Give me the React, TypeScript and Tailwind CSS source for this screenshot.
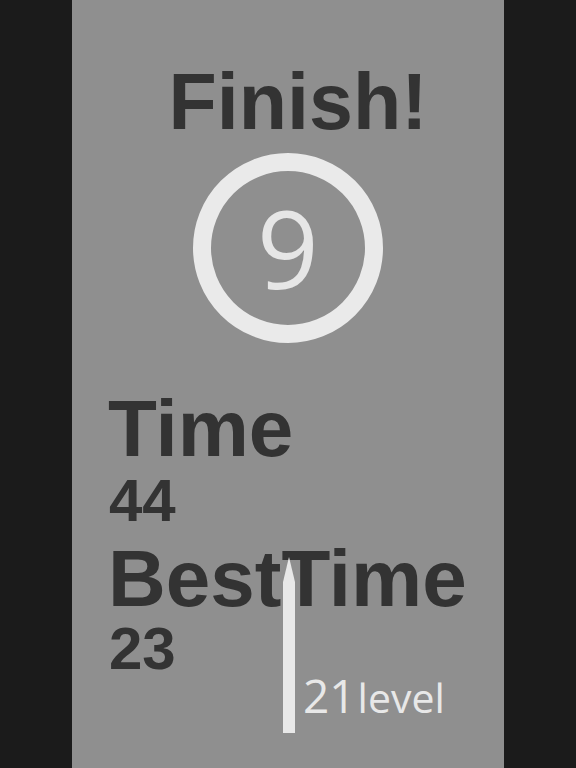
import React from "react";

export default function App() {
  return (
    <div className="w-full h-[768px] bg-[#1b1b1b] flex justify-center overflow-hidden">
      <div className="relative w-[432px] h-[768px] bg-[#8f8f8f] flex flex-col text-[#333333] [font-family:'Liberation_Sans',Arial,sans-serif] font-bold">
        <div className="mt-[62px] pl-[20px] text-center text-[79px] leading-none">Finish!</div>
        <div className="mt-[12px] self-center w-[190px] h-[190px] rounded-full border-[18px] border-[#eaeaea] flex items-center justify-center">
          <span className="text-[108px] leading-none font-normal text-[#e6e6e6] [font-family:'Open_Sans',sans-serif]">9</span>
        </div>
        <div className="mt-[46px] pl-[36px] text-[80px] leading-none">Time</div>
        <div className="mt-[2px] pl-[37px] text-[60px] leading-none">44</div>
        <div className="mt-[8px] pl-[36px] text-[80px] leading-none">BestTime</div>
        <div className="pl-[37px] text-[60px] leading-none">23</div>

        <svg className="absolute left-[210px] top-[556px]" width="14" height="177" viewBox="0 0 14 177">
          <polygon points="7,1 13,26 13,177 1,177 1,26" fill="#e8e8e8" />
        </svg>

        <div className="absolute left-[231px] top-[672px] flex items-baseline text-[#e8e8e8] font-normal [font-family:'Open_Sans',sans-serif] leading-none">
          <span className="text-[46px] leading-none">21</span>
          <span className="ml-[2px] text-[41px] leading-none">level</span>
        </div>
      </div>
    </div>
  );
}
